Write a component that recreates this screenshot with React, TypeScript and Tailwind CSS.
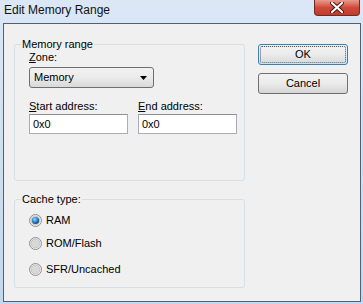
import React from "react";

const font = { fontFamily: '"Liberation Sans", Arial, sans-serif' };

function Radio({ checked }: { checked?: boolean }) {
  return (
    <svg width="13" height="13" viewBox="0 0 13 13" className="shrink-0">
      <defs>
        <linearGradient id="rg" x1="0" y1="0" x2="1" y2="1">
          <stop offset="0" stopColor="#e6e6e6" />
          <stop offset="1" stopColor="#ffffff" />
        </linearGradient>
        <radialGradient id="dot" cx="0.4" cy="0.35" r="0.7">
          <stop offset="0" stopColor="#9fd8f8" />
          <stop offset="0.5" stopColor="#2d8ad0" />
          <stop offset="1" stopColor="#0b3b6e" />
        </radialGradient>
      </defs>
      <circle cx="6.5" cy="6.5" r="6" fill="url(#rg)" stroke="#8e8f8f" />
      <circle cx="6.5" cy="6.5" r="4.5" fill="#d8d8d8" stroke="#bdbdbd" strokeWidth="0.8" />
      {checked && <circle cx="6.5" cy="6.5" r="3.6" fill="url(#dot)" />}
    </svg>
  );
}

function GroupBox({ title, className, children }: { title: string; className: string; children: React.ReactNode }) {
  return (
    <div className={`relative border border-[#d5dfe5] rounded-[3px] ${className}`}>
      <span className="absolute left-[6px] top-[-7px] bg-[#f0f0f0] px-[1px] leading-[13px]">{title}</span>
      {children}
    </div>
  );
}

export default function App() {
  return (
    <div
      className="w-[363px] h-[304px] bg-gradient-to-b from-[#dbe7f5] to-[#c3d7ee] flex flex-col text-[11px] text-black overflow-hidden"
      style={font}
    >
      {/* title bar */}
      <div className="h-[23px] flex items-start shrink-0">
        <span className="pl-[4px] pt-[3px] text-[12px] leading-[15px] text-[#111]">Edit Memory Range</span>
        <div className="ml-auto mr-[3px] w-[46px] h-[16px] rounded-b-[4px] border border-t-0 border-[#6e2a25] bg-gradient-to-b from-[#e89a8a] via-[#d04a3c] to-[#c23a28] flex items-center justify-center">
          <svg width="14" height="11" viewBox="0 0 14 11">
            <path d="M2 1 L12 10 M12 1 L2 10" stroke="#3b1510" strokeWidth="4" strokeLinecap="round" />
            <path d="M2 1 L12 10 M12 1 L2 10" stroke="#ffffff" strokeWidth="2.2" strokeLinecap="round" />
          </svg>
        </div>
      </div>

      {/* client area */}
      <div className="mx-[3px] w-[358px] h-[279px] border border-[#4f6275] bg-[#f0f0f0] flex">
        <div className="pl-[10px] pt-[20px] w-[241px] shrink-0">
          <GroupBox title="Memory range" className="h-[137px]">
            <div className="pl-[14px] pt-[6px]">
              <div className="leading-[13px]">
                <span className="underline">Z</span>one:
              </div>
              <div className="mt-[3px] w-[125px] h-[21px] border border-[#707070] rounded-[3px] bg-gradient-to-b from-[#f2f2f2] via-[#ebebeb] to-[#d9d9d9] flex items-center pl-[4px] pr-[6px]">
                <span>Memory</span>
                <svg className="ml-auto" width="7" height="4" viewBox="0 0 7 4">
                  <path d="M0 0 H7 L3.5 4 Z" fill="#000" />
                </svg>
              </div>
              <div className="mt-[12px] flex gap-[10px]">
                <div className="w-[99px]">
                  <div className="leading-[13px]">
                    <span className="underline">S</span>tart address:
                  </div>
                  <div className="mt-[1px] h-[20px] border border-[#abadb3] border-t-[#8c9096] bg-white flex items-center pl-[3px]">0x0</div>
                </div>
                <div className="w-[99px]">
                  <div className="leading-[13px]">
                    <span className="underline">E</span>nd address:
                  </div>
                  <div className="mt-[1px] h-[20px] border border-[#abadb3] border-t-[#8c9096] bg-white flex items-center pl-[3px]">0x0</div>
                </div>
              </div>
            </div>
          </GroupBox>

          <GroupBox title="Cache type:" className="mt-[18px] h-[89px]">
            <div className="pl-[14px] pt-[14px] flex flex-col">
              <label className="flex items-center gap-[4px] h-[13px]">
                <Radio checked />
                <span>RAM</span>
              </label>
              <label className="flex items-center gap-[4px] h-[13px] mt-[10px]">
                <Radio />
                <span>ROM/Flash</span>
              </label>
              <label className="flex items-center gap-[4px] h-[13px] mt-[13px]">
                <Radio />
                <span>SFR/Uncached</span>
              </label>
            </div>
          </GroupBox>
        </div>

        <div className="pl-[13px] pt-[20px] flex flex-col gap-[8px]">
          <div className="w-[90px] h-[21px] rounded-[3px] border border-[#3c7fb1] bg-gradient-to-b from-[#eaf6fd] to-[#bee6fd] p-[1px]">
            <div className="h-full rounded-[2px] border border-dotted border-[#555] bg-gradient-to-b from-[#f2f2f2] via-[#ebebeb] to-[#dcdcdc] flex items-center justify-center">
              OK
            </div>
          </div>
          <div className="w-[90px] h-[21px] rounded-[3px] border border-[#707070] bg-gradient-to-b from-[#f2f2f2] via-[#ebebeb] to-[#d5d5d5] flex items-center justify-center">
            Cancel
          </div>
        </div>
      </div>
    </div>
  );
}
